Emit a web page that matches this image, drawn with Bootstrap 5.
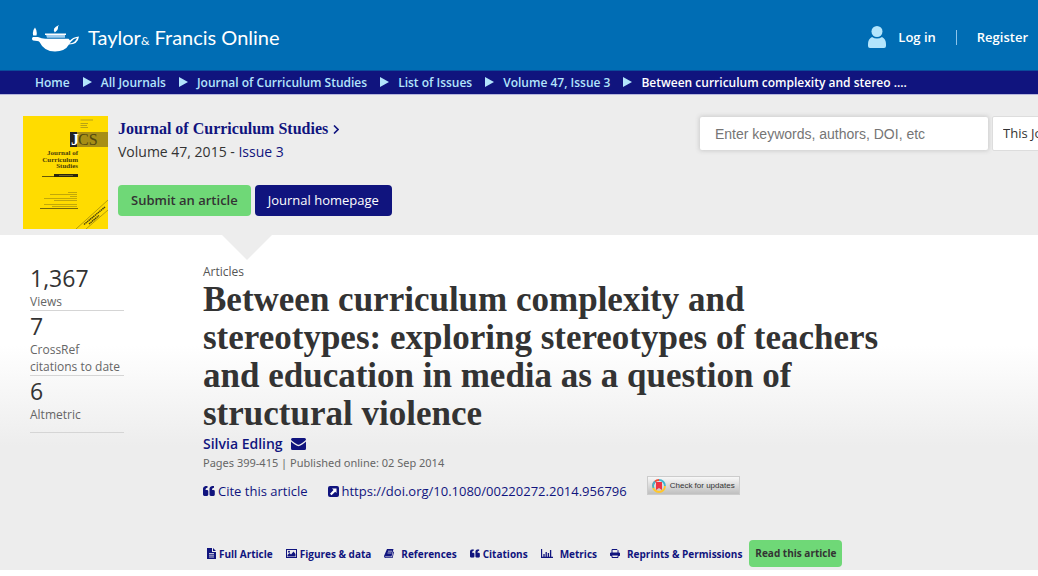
<!DOCTYPE html>
<html lang="en">
<head>
<meta charset="utf-8">
<meta name="viewport" content="width=device-width, initial-scale=1">
<title>Journal of Curriculum Studies - Taylor &amp; Francis Online</title>
<link href="https://cdn.jsdelivr.net/npm/bootstrap@5.3.0/dist/css/bootstrap.min.css" rel="stylesheet">
<style>
:root{--navy:#10147e;--sky:#b3e5fc;--ink:#333}
body{font-family:"Open Sans",sans-serif;font-size:13px;line-height:22px;color:var(--ink);background:#fff}
a{color:var(--navy);text-decoration:none}
a:hover{text-decoration:underline}
svg{flex:none}
.semi{font-weight:600}
.site-top{background:#006db4;height:70px;padding:0 10px 0 32px}
.site-top a{color:#fff}
.brand-word{font-size:20px;line-height:28px;margin-left:8px;font-family:Lato,sans-serif}
.brand-word small{font-size:12px}
.bar-sep{width:1px;height:15px;background:#8dc4ea;margin:0 20px}
.trail{background:var(--navy);padding:1px 35px 0;height:25px;border-top:1px solid #0a4b9b;border-bottom:1px solid #b5b6dc;font-size:12px;overflow:hidden}
.trail .breadcrumb{margin:0;flex-wrap:nowrap;white-space:nowrap}
.trail a{color:var(--sky)}
.trail li+li::before{content:"";display:inline-block;border:5px solid transparent;border-left:9px solid var(--sky);border-right:0;margin:0 9px 0 13px}
.journal{background:#ededed;padding:21px 0 6px 23px;overflow:hidden;gap:10px}
.journal-name{font-family:"Liberation Serif",serif;font-size:16px;line-height:26px;font-weight:700;margin:0}
.journal-name a{display:inline-flex;align-items:center;gap:5px}
.vol{line-height:19px;font-size:14px}
.btn-tf{font-size:13px;line-height:19px;padding:6px 13px;border:0;border-radius:4px;color:var(--ink);background:#6fd877}
.btn-navy{background:var(--navy);color:#fff}
.btn-tf:hover{background:#5cc765;color:var(--ink)}
.btn-navy:hover{background:#22269a;color:#fff}
.finder{flex:0 0 338px;min-width:0}
.finder .form-control{flex:0 0 288px;height:33px;border:0;border-radius:2px;padding:0 15px;font:14px/20px "Liberation Sans",sans-serif;box-shadow:0 0 4px 1px #ccc;margin-top:1px}
.finder .form-control::placeholder{color:#757575}
.finder .form-select{flex:0 0 130px;height:35px;border:1px solid #ddd;border-radius:2px;padding:0 10px;font-size:13px;color:var(--ink)}
.article{background:linear-gradient(#fff 33%,#ededed 63%);padding:27px 30px 3px;position:relative}
.article::before{content:"";position:absolute;left:222px;top:0;border:25px solid transparent;border-top-color:#ededed;border-bottom:0}
.stats{flex:0 0 94px;margin:1px 79px 0 0}
.stat{border-bottom:1px solid #d5d5d5;font-size:12px;line-height:17px;color:#666}
.stat:last-child{padding-bottom:9px}
.stat b{display:block;font-size:23px;line-height:30px;font-weight:400;color:var(--ink)}
.kind{font-size:12px;line-height:19px;color:#555}
h1.headline{font-family:"Liberation Serif",serif;font-size:35px;line-height:38px;font-weight:700;color:var(--ink);margin:0;max-width:710px}
.author{font-size:14px}
.dates{font-family:"Noto Sans",sans-serif;font-size:11px;line-height:16px;color:#666}
.cite{margin-top:5px;line-height:24px;gap:20px}
.cite a{gap:3px}
.updates{border:1px solid #ccc;background:linear-gradient(#f8f8f8,#bfbfbf);height:19px;padding:0 4px;font:8px/16px "Liberation Sans",sans-serif;color:#333;margin-bottom:11px;border-radius:0}
.tools{margin-top:34px;font-size:10px;font-weight:700;padding-left:4px;gap:13px}
.tools .nav-link{padding:0;color:var(--navy);display:flex;align-items:center;gap:3px}
.tools .btn-tf{font-size:10px;font-weight:700;line-height:15px;padding:6px;margin-left:-6px}
</style>
</head>
<body>
<svg class="d-none" aria-hidden="true">
<symbol id="quote" viewBox="0 0 12 10"><path d="M0 2.5Q0 .5 2.5 0H4.5V1.7Q2.5 1.8 2.5 3.8V4H4Q5.3 4 5.3 5.3V8.6Q5.3 10 4 10H1.4Q0 10 0 8.6ZM6.5 2.5Q6.5.5 9 0h2V1.7Q9 1.8 9 3.8V4h1.5Q11.8 4 11.8 5.3V8.6Q11.8 10 10.5 10H7.9Q6.5 10 6.5 8.6Z" fill="currentColor"/></symbol>
</svg>
<header class="site-top d-flex align-items-center justify-content-between">
  <a href="#" class="d-flex align-items-center mt-2">
    <svg width="48" height="28" viewBox="0 0 48 28" fill="#fff"><path d="M3 2.500Q5.500 6 4.500 10.500H1.200Q0 6 3 2.500ZM1 12H6Q10 14 14 13.800H36.500L38 15.500Q41 12 47 11.500Q46 19.500 37 19.500Q33 26.500 23 26.500Q12 26.500 7.500 17Q6 15.500 1 15.500Q-1 13.500 1 12ZM39.500 16.200 37.500 18.500Q43 18 45 13Q41.500 13.500 39.500 16.200Z" fill-rule="evenodd"/><path d="M14 9.500H33V12.800H15Z" fill="#9fcdef"/><path d="M13 8.500H34V10H13Z"/><path d="M27 0Q25.500 1.800 26 3.200Q26 5.500 22.800 7.500Q19.500 3.200 27 0Z"/></svg>
    <span class="brand-word">Taylor<small>&amp;</small> Francis Online</span>
  </a>
  <nav class="d-flex align-items-center semi mt-1">
    <svg width="18" height="22" viewBox="0 0 18 22" fill="#b3e5fc"><circle cx="9" cy="5.500" r="5.500"/><path d="M4 11Q9 14 14 11Q18 13 18 18V20Q18 22 16 22H2Q0 22 0 20V18Q0 13 4 11Z"/></svg>
    <a href="#" class="ps-2 ms-1">Log in</a><span class="bar-sep"></span><a href="#">Register</a>
  </nav>
</header>
<nav class="trail semi" aria-label="Breadcrumb">
  <ol class="breadcrumb">
    <li><a href="#">Home</a></li><li><a href="#">All Journals</a></li><li><a href="#">Journal of Curriculum Studies</a></li><li><a href="#">List of Issues</a></li><li><a href="#">Volume 47, Issue 3</a></li><li class="text-white" aria-current="page">Between curriculum complexity and stereo ....</li>
  </ol>
</nav>
<section class="journal d-flex">
  <svg width="85" height="113" viewBox="0 0 85 113" role="img" aria-label="Journal cover">
    <rect width="85" height="113" fill="#ffdc00"/>
    <path d="M57.500 4H70M57.500 7.500H65M57.500 9.500H64M57.500 11.500H65" stroke="#a89417" stroke-width=".8"/>
    <path d="M54 16H85V31H54Z" fill="#a78e16"/><path d="M47 16H54V31H47Z" fill="#222"/>
    <g font-family="Liberation Serif,serif"><text x="48" y="29" font-size="16" font-weight="700" fill="#fff">J</text><text x="55" y="29" font-size="16" fill="#51470e">CS</text>
    <g font-size="7" font-weight="700" fill="#4b4109" text-anchor="end"><text x="55" y="39">Journal of</text><text x="55" y="45.500">Curriculum</text><text x="55" y="52">Studies</text></g></g>
    <path d="M19 60.500H31" stroke="#665808"/><path d="M31 58H55V61H31Z" fill="#2b270d"/><path d="M36 59.500H50" stroke="#8b7c33" stroke-width=".7"/>
    <path d="M45 76.500H54M27 78.500H54M47 80.500H54M21 82.500H54M31 84.500H54M21 88.500H54M29 90.500H54" stroke="#b39a0a" stroke-width=".8"/><path d="M17 92.500H55" stroke="#766708"/>
    <path d="M53 113 85 84M63 113 85 94" stroke="#a28c0b" stroke-width=".8"/><path d="M61 108.500 82 91M66 108 76 99.500" stroke="#4e430a" stroke-width="1.500" stroke-dasharray="1.500 .5"/>
  </svg>
  <div class="flex-grow-1">
    <h2 class="journal-name"><a href="#">Journal of Curriculum Studies <svg width="6" height="9" viewBox="0 0 6 9" fill="none" stroke="currentColor" stroke-width="1.600"><path d="M1 .5 5 4.500 1 8.500"/></svg></a></h2>
    <div class="vol">Volume 47, 2015 - <a href="#">Issue 3</a></div>
    <div class="d-flex gap-1 mt-4"><button class="btn btn-tf semi">Submit an article</button><button class="btn btn-tf btn-navy">Journal homepage</button></div>
  </div>
  <form class="finder d-flex">
    <input class="form-control me-1" type="search" aria-label="Search" placeholder="Enter keywords, authors, DOI, etc">
    <select class="form-select" aria-label="Search scope"><option>This Journal</option></select>
  </form>
</section>
<main class="article d-flex align-items-start">
  <aside class="stats">
    <div class="stat"><b>1,367</b>Views</div>
    <div class="stat"><b>7</b>CrossRef<br>citations to date</div>
    <div class="stat"><b>6</b>Altmetric</div>
  </aside>
  <article class="flex-grow-1">
    <div class="kind">Articles</div>
    <h1 class="headline">Between curriculum complexity and stereotypes: exploring stereotypes of teachers and education in media as a question of structural violence</h1>
    <a href="#" class="author semi d-flex align-items-center gap-2">Silvia Edling <svg width="15" height="12" viewBox="0 0 15 12" fill="currentColor"><path d="M0 1.500Q0 0 1.500 0H13.500Q15 0 15 1.500Q14.500 3 8.500 6.500Q7.500 7 6.500 6.500Q.5 3 0 1.500ZM0 3.500Q1 4.800 6 7.800Q7.500 8.500 9 7.800Q14 4.800 15 3.500V10.500Q15 12 13.500 12H1.500Q0 12 0 10.500Z"/></svg></a>
    <div class="dates">Pages 399-415 | Published online: 02 Sep 2014</div>
    <div class="cite d-flex align-items-center">
      <a href="#" class="d-flex align-items-center"><svg width="12" height="10"><use href="#quote"/></svg>Cite this article</a>
      <a href="#" class="d-flex align-items-center"><svg width="11" height="11" viewBox="0 0 11 11"><rect width="11" height="11" rx="2" fill="currentColor"/><path d="M4 2.500H8.500V7L7.200 5.700 3.500 9.200 2 7.700 5.500 4Z" fill="#fff"/></svg>https://doi.org/10.1080/00220272.2014.956796</a>
      <button class="updates d-flex align-items-center gap-1"><svg width="14" height="14" viewBox="0 0 14 14"><g fill="none" stroke-width="1.800"><path d="M7 1A6 6 0 0 1 13 7" stroke="#40b5d0"/><path d="M1 7A6 6 0 0 1 7 1" stroke="#ee4b38"/><path d="M13 7A6 6 0 0 1 1 7" stroke="#ffc72c"/><path d="M1.500 9A6 6 0 0 1 3 2.500" stroke="#40b5d0"/></g><path d="M4 3H10V11L7 9 4 11Z" fill="#ed3443"/></svg>Check for updates</button>
    </div>
    <nav class="tools nav align-items-center">
      <a class="nav-link" href="#"><svg width="9" height="11" viewBox="0 0 9 11"><path d="M0 0H5V4H9V11H0ZM6 0 9 3H6Z" fill="currentColor"/><path d="M2 5.500H7M2 7.200H7M2 9H7" stroke="#ededed" stroke-width=".8"/></svg>Full Article</a>
      <a class="nav-link" href="#"><svg width="11" height="9" viewBox="0 0 11 9"><rect x=".5" y=".5" width="10" height="8" fill="none" stroke="currentColor"/><path d="M1.500 7.500V6L3.500 4 5 5.500 7.500 2.500 9.500 5V7.500Z" fill="currentColor"/><circle cx="3" cy="2.700" r="1" fill="currentColor"/></svg>Figures &amp; data</a>
      <a class="nav-link" href="#"><svg width="10" height="9" viewBox="0 0 10 9" class="me-1"><path d="M3 0H9.500L7.500 7.500H1Q1 8.200 2 8.200H8L9.300 2.500 10 3 8.600 9H1.500Q0 9 0 7Z" fill="currentColor"/><path d="M4 2.200H8M3.500 4H7.500" stroke="#ededed" stroke-width=".7"/></svg>References</a>
      <a class="nav-link" href="#"><svg width="10" height="9" viewBox="0 0 12 10"><use href="#quote" width="12" height="10"/></svg>Citations</a>
      <a class="nav-link" href="#"><svg width="12" height="9" viewBox="0 0 12 9" class="me-1"><path d="M.5 0V8.500H12M3 8V5M5.200 8V3M7.400 8V4M9.600 8V1" fill="none" stroke="currentColor" stroke-width="1.300"/></svg>Metrics</a>
      <a class="nav-link" href="#"><svg width="10" height="9" viewBox="0 0 10 9" class="me-1"><path d="M2 4V.5H7L8 1.500V4M2 6.500V8.500H8V6.500H9.500V4H.5V6.500Z" fill="none" stroke="currentColor"/><path d="M0 4H10V6.500H0Z" fill="currentColor"/></svg>Reprints &amp; Permissions</a>
      <button class="btn btn-tf">Read this article</button>
    </nav>
  </article>
</main>
<script src="https://cdn.jsdelivr.net/npm/bootstrap@5.3.0/dist/js/bootstrap.bundle.min.js"></script>
</body>
</html>
